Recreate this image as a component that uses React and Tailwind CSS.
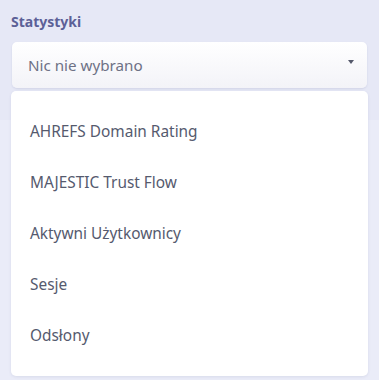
import React from 'react';

const options = ['AHREFS Domain Rating', 'MAJESTIC Trust Flow', 'Aktywni Użytkownicy', 'Sesje', 'Odsłony'];

export default function App() {
  return (
    <div
      className="w-[379px] h-[380px] overflow-hidden bg-[#e6e8f6] relative"
      style={{ fontFamily: '"Noto Sans", "Open Sans", sans-serif' }}
    >
      {/* lighter content band behind the open menu */}
      <div className="absolute left-0 right-0 top-[120px] bottom-0 bg-[#eaecf8]" />
      <div className="relative px-[11px] pt-[12px]">
        <label className="block text-[14px] font-bold text-[#5c6097] leading-[20px]">Statystyki</label>
        <div className="mt-[10px] mx-px">
          <button className="w-full h-[46px] flex items-center justify-between pl-[16px] pr-[13px] rounded-[5px] bg-gradient-to-b from-white to-[#f3f3f8] shadow-[0_1px_2px_rgba(60,64,120,0.12)] text-left">
            <span className="text-[15.2px] text-[#6e7185]">Nic nie wybrano</span>
            <span className="w-0 h-0 border-l-[3.5px] border-r-[3.5px] border-t-[4px] border-l-transparent border-r-transparent border-t-[#55596b] mb-[6px]" />
          </button>
        </div>
        <ul className="mt-[3px] bg-white rounded-[5px] py-[15px] shadow-[0_1px_3px_rgba(60,64,120,0.1)]">
          {options.map((o) => (
            <li key={o} className="h-[51px] flex items-center px-[19px] text-[15.4px] text-[#555a6e]">
              {o}
            </li>
          ))}
        </ul>
      </div>
    </div>
  );
}
